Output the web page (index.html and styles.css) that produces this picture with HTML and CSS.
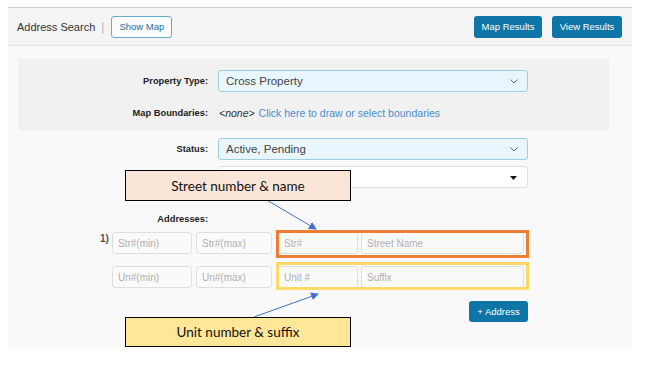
FILE: index.html
```html
<!DOCTYPE html>
<html>
<head>
<meta charset="utf-8">
<link rel="stylesheet" href="styles.css">
</head>
<body>
<div class="page">
  <div class="header">
    <span class="title">Address Search</span>
    <span class="sep">|</span>
    <button class="btn-outline">Show Map</button>
    <span class="spacer"></span>
    <button class="btn-primary btn-map">Map Results</button>
    <button class="btn-primary btn-view">View Results</button>
  </div>
  <div class="content">
    <div class="panel">
      <div class="row row-select">
        <label class="lbl">Property Type:</label>
        <div class="select select-blue"><span>Cross Property</span>
          <svg class="chev" width="8" height="5" viewBox="0 0 8 5"><polyline points="0.5,0.5 4,4 7.5,0.5" fill="none" stroke="#666" stroke-width="1"/></svg>
        </div>
      </div>
      <div class="row row-text">
        <label class="lbl">Map Boundaries:</label>
        <div class="bounds"><em>&lt;none&gt;</em> <a class="link">Click here to draw or select boundaries</a></div>
      </div>
    </div>
    <div class="row row-status">
      <label class="lbl">Status:</label>
      <div class="select select-blue"><span>Active, Pending</span>
        <svg class="chev" width="8" height="5" viewBox="0 0 8 5"><polyline points="0.5,0.5 4,4 7.5,0.5" fill="none" stroke="#666" stroke-width="1"/></svg>
      </div>
    </div>
    <div class="row row-other">
      <span></span>
      <div class="select select-white"><span></span>
        <svg class="caret" width="7" height="4" viewBox="0 0 7 4"><polygon points="0,0 7,0 3.5,4" fill="#111"/></svg>
      </div>
    </div>
    <div class="row row-addr-label">
      <label class="lbl">Addresses:</label>
      <span></span>
    </div>
    <div class="addr-row addr-1">
      <span class="num">1)</span>
      <input class="in w80" placeholder="Str#(min)">
      <input class="in w76" placeholder="Str#(max)">
      <input class="in w80 ml6" placeholder="Str#">
      <input class="in w163 ml3" placeholder="Street Name">
    </div>
    <div class="addr-row addr-2">
      <span class="num"></span>
      <input class="in w80" placeholder="Un#(min)">
      <input class="in w76" placeholder="Un#(max)">
      <input class="in w80 ml6" placeholder="Unit #">
      <input class="in w163 ml3" placeholder="Suffix">
    </div>
    <div class="add-row">
      <button class="btn-primary btn-add">+ Address</button>
    </div>
  </div>
</div>

<svg class="overlay" width="645" height="367" viewBox="0 0 645 367">
  <defs>
    <marker id="ah" markerWidth="8" markerHeight="8" refX="7" refY="4" orient="auto" markerUnits="userSpaceOnUse">
      <polygon points="0,0 8,4 0,8" fill="#4472c4"/>
    </marker>
  </defs>
  <rect x="277.5" y="231.5" width="250" height="25" fill="none" stroke="#ed7d31" stroke-width="3"/>
  <rect x="277.5" y="263.5" width="250" height="25" fill="none" stroke="#ffd966" stroke-width="3"/>
  <line x1="265" y1="199" x2="316" y2="229" stroke="#4472c4" stroke-width="1" marker-end="url(#ah)"/>
  <line x1="254" y1="317" x2="318" y2="294" stroke="#4472c4" stroke-width="1" marker-end="url(#ah)"/>
</svg>
<div class="callout callout-street">Street number &amp; name</div>
<div class="callout callout-unit">Unit number &amp; suffix</div>
</body>
</html>
```

FILE: styles.css
```css
* { box-sizing: border-box; }
html, body { margin: 0; padding: 0; background: #fff; }
body { font-family: "Liberation Sans", Arial, sans-serif; color: #333; width: 645px; height: 367px; overflow: hidden; position: relative; }

.page {
  margin: 7px 0 0 8px;
  width: 624px;
  height: 340px;
  background: #f9f9f9;
  border-top: 1px solid #c3cfd3;
}

.header {
  height: 38px;
  display: flex;
  align-items: center;
  padding: 0 10px 0 9px;
  background: #f4f4f4;
  border-bottom: 1px solid #e3e3e3;
}
.title { font-size: 11px; color: #333; }
.sep { color: #b5b5b5; font-size: 12px; margin: 0 7px 0 6px; }
.spacer { flex: 1; }
button { font-family: "Liberation Sans", Arial, sans-serif; cursor: pointer; }
.btn-outline {
  height: 22px; padding: 0; width: 61px;
  border: 1px solid #67abc9; border-radius: 3px;
  background: #fbfdfe; color: #22709c; font-size: 9.5px;
}
.btn-primary {
  height: 22px; border: none; border-radius: 3px;
  background: #0e75a6; color: #fff; font-size: 9.5px; padding: 0;
}
.btn-map { width: 68px; margin-right: 10px; }
.btn-view { width: 70px; }

.content { padding: 13px 23px 0 10px; }

.panel {
  background: #f1f1f1;
  height: 72px;
  padding-top: 11px;
}

.row {
  display: grid;
  grid-template-columns: 190px 310px;
  column-gap: 10px;
  align-items: center;
}
.lbl { text-align: right; font-weight: bold; font-size: 9.3px; color: #222; }

.select {
  height: 22px; border-radius: 3px;
  display: flex; align-items: center; justify-content: space-between;
  padding: 0 8px 0 7px; font-size: 11.5px; color: #444;
}
.select-blue { background: #eaf6fd; border: 1px solid #9fcde2; }
.select-white { background: #fff; border: 1px solid #e0e0e0; }
.chev { margin-right: 1px; }
.caret { margin-right: 2px; margin-top: 1px; }

.row-text { height: 20px; margin-top: 11px; }
.bounds { font-size: 10.5px; color: #333; padding-left: 1px; }
.bounds em { font-style: italic; }
.link { color: #4a8ecf; margin-left: 1px; }

.row-status { margin-top: 7px; }
.row-other { margin-top: 6px; }
.row-addr-label { margin-top: 25px; height: 12px; }

.addr-row { display: flex; align-items: center; padding-left: 82px; height: 22px; }
.addr-1 { margin-top: 7px; }
.addr-2 { margin-top: 12px; }
.num { width: 12px; font-size: 10px; font-weight: bold; color: #555; align-self: flex-start; margin-top: 1px; }
.in {
  height: 22px; border: 1px solid #dedede; border-radius: 3px;
  background: #fafafa; font-family: "Liberation Sans", Arial, sans-serif;
  font-size: 10px; padding: 0 5px; color: #333; margin-right: 4px;
}
.in::placeholder { color: #b0b0b0; }
.w80 { width: 80px; }
.w76 { width: 76px; }
.w163 { width: 163px; }
.ml6 { margin-left: 2px; }
.ml3 { margin-left: -1px; }

.add-row { display: flex; justify-content: flex-end; width: 510px; margin-top: 13px; }
.btn-add { width: 59px; height: 21px; }

.overlay { position: absolute; left: 0; top: 0; pointer-events: none; }

.callout {
  position: absolute; left: 125px; width: 226px;
  border: 1px solid #000;
  display: flex; align-items: center; justify-content: center;
  font-family: Lato, "Open Sans", sans-serif; font-size: 13.5px; color: #111;
}
.callout-street { top: 170px; height: 31px; background: #fbe5d6; }
.callout-unit { top: 317px; height: 30px; background: #ffe699; }
```
